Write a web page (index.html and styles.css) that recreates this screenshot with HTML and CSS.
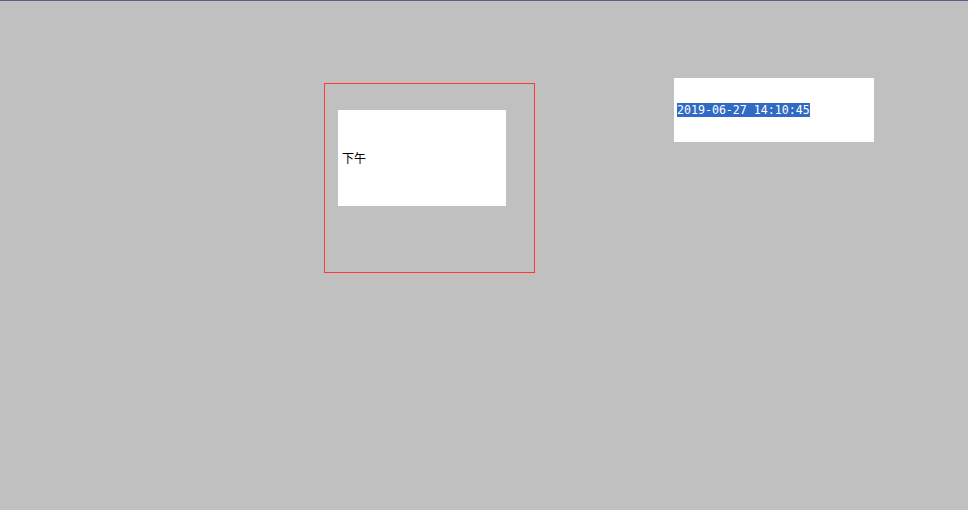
FILE: index.html
```html
<!DOCTYPE html>
<html lang="zh-CN">
<head>
    <meta charset="UTF-8">
    <meta name="viewport" content="width=device-width, initial-scale=1.0">
    <title>时间显示</title>
    <link rel="stylesheet" href="styles.css">
</head>
<body>

    <div class="stage">
        <div class="frame">
            <div class="period-box">
                <span class="period">下午</span>
            </div>
        </div>

        <div class="clock-box">
            <span class="clock">2019-06-27 14:10:45</span>
        </div>
    </div>

</body>
</html>
```

FILE: styles.css
```css
html, body {
    margin: 0;
    height: 100%;
}
body {
    background-color: #c0c0c0;
    border-top: 1px solid #5c5c8e;
    box-sizing: border-box;
}
.stage {
    display: flex;
    align-items: flex-start;
    gap: 139px;
    padding: 77px 0 0 324px;
}
.frame {
    width: 211px;
    height: 190px;
    margin-top: 5px;
    border: 1px solid #ff3838;
    padding: 26px 0 0 13px;
    box-sizing: border-box;
    flex-shrink: 0;
}
.period-box {
    width: 168px;
    height: 96px;
    padding-left: 4px;
    box-sizing: border-box;
    background: white;
    display: flex;
    align-items: center;
}
.period {
    font-family: "Noto Sans CJK SC", sans-serif;
    font-size: 12px;
    line-height: 14px;
    color: black;
    margin-top: -1px;
}
.clock-box {
    width: 200px;
    height: 64px;
    padding-left: 3px;
    box-sizing: border-box;
    flex-shrink: 0;
    background: white;
    display: flex;
    align-items: center;
}
.clock {
    font-family: "DejaVu Sans Mono", monospace;
    font-size: 11.6px;
    line-height: 14px;
    background-color: #316ac5;
    color: white;
}
```
